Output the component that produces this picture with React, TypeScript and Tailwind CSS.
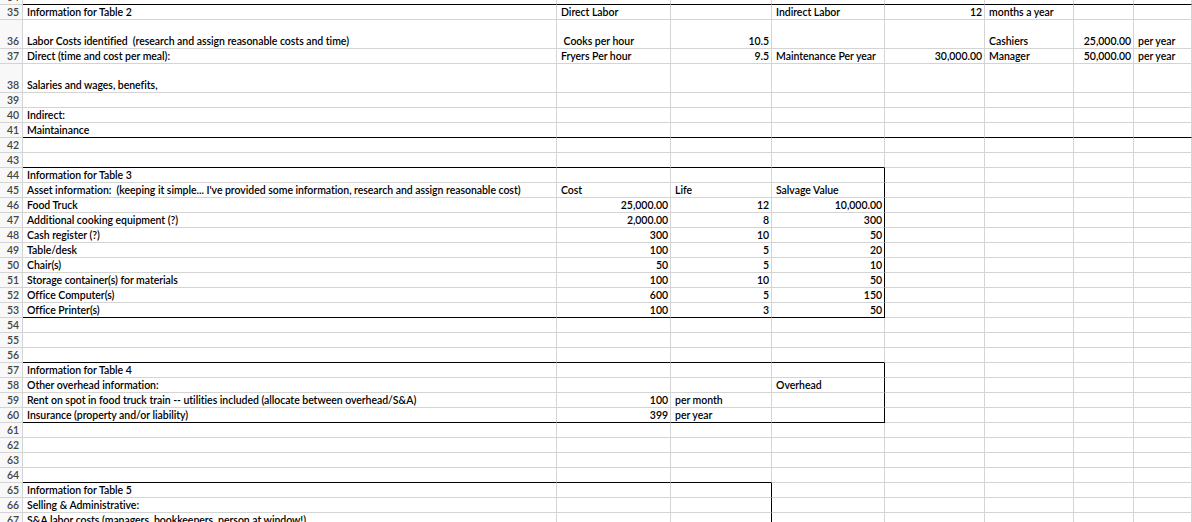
import React from 'react';

type Cell = { t: string; r?: boolean };
type Row = {
	n: number;
	h?: 'short' | 'tall';
	cells?: (Cell | null)[];
	bottom?: number; // how many columns get a black bottom line (from A)
	rightD?: boolean; // black right line after D
	rightC?: boolean; // black right line after C
};

const colW = [
	'w-[534px]',
	'w-[114px]',
	'w-[101px]',
	'w-[113px]',
	'w-[100px]',
	'w-[89px]',
	'w-[60px]',
	'flex-1',
];

const L = (t: string): Cell => ({ t });
const R = (t: string): Cell => ({ t, r: true });

const rows: Row[] = [
	{ n: 34, h: 'short', bottom: 8 },
	{
		n: 35,
		cells: [L('Information for Table 2'), L('Direct Labor'), null, L('Indirect Labor'), R('12'), L('months a year')],
	},
	{
		n: 36,
		h: 'tall',
		cells: [
			L('Labor Costs identified  (research and assign reasonable costs and time)'),
			L(' Cooks per hour'),
			R('10.5'),
			null,
			null,
			L('Cashiers'),
			R('25,000.00'),
			L('per year'),
		],
	},
	{
		n: 37,
		cells: [
			L('Direct (time and cost per meal):'),
			L('Fryers Per hour'),
			R('9.5'),
			L('Maintenance Per year'),
			R('30,000.00'),
			L('Manager'),
			R('50,000.00'),
			L('per year'),
		],
	},
	{ n: 38, h: 'tall', cells: [L('Salaries and wages, benefits,')] },
	{ n: 39 },
	{ n: 40, cells: [L('Indirect:')] },
	{ n: 41, cells: [L('Maintainance')], bottom: 8 },
	{ n: 42 },
	{ n: 43, bottom: 4 },
	{ n: 44, cells: [L('Information for Table 3')], rightD: true },
	{
		n: 45,
		cells: [
			L("Asset information:  (keeping it simple... I've provided some information, research and assign reasonable cost)"),
			L('Cost'),
			L('Life'),
			L('Salvage Value'),
		],
		rightD: true,
	},
	{ n: 46, cells: [L('Food Truck'), R('25,000.00'), R('12'), R('10,000.00')], rightD: true },
	{ n: 47, cells: [L('Additional cooking equipment (?)'), R('2,000.00'), R('8'), R('300')], rightD: true },
	{ n: 48, cells: [L('Cash register (?)'), R('300'), R('10'), R('50')], rightD: true },
	{ n: 49, cells: [L('Table/desk'), R('100'), R('5'), R('20')], rightD: true },
	{ n: 50, cells: [L('Chair(s)'), R('50'), R('5'), R('10')], rightD: true },
	{ n: 51, cells: [L('Storage container(s) for materials'), R('100'), R('10'), R('50')], rightD: true },
	{ n: 52, cells: [L('Office Computer(s)'), R('600'), R('5'), R('150')], rightD: true },
	{ n: 53, cells: [L('Office Printer(s)'), R('100'), R('3'), R('50')], rightD: true, bottom: 4 },
	{ n: 54 },
	{ n: 55 },
	{ n: 56, bottom: 4 },
	{ n: 57, cells: [L('Information for Table 4')], rightD: true },
	{ n: 58, cells: [L('Other overhead information:'), null, null, L('Overhead')], rightD: true },
	{
		n: 59,
		cells: [
			L('Rent on spot in food truck train -- utilities included (allocate between overhead/S&A)'),
			R('100'),
			L('per month'),
		],
		rightD: true,
	},
	{ n: 60, cells: [L('Insurance (property and/or liability)'), R('399'), L('per year')], rightD: true, bottom: 4 },
	{ n: 61 },
	{ n: 62 },
	{ n: 63 },
	{ n: 64, bottom: 3 },
	{ n: 65, cells: [L('Information for Table 5')], rightC: true },
	{ n: 66, cells: [L('Selling & Administrative:')], rightC: true },
	{ n: 67, cells: [L('S&A labor costs (managers, bookkeepers, person at window!)')], rightC: true },
];

const SheetRow: React.FC<{ row: Row }> = ({ row }) => {
	const height =
		row.h === 'short' ? 'h-[5px]' : row.h === 'tall' ? 'h-[29px]' : 'h-[15px]';
	return (
		<div className={`flex shrink-0 ${height}`}>
			<div className="w-[23px] shrink-0 flex items-end justify-end pr-[3px] border-r border-b border-[#d4d4d4] bg-[#f8f8f8] text-[#444] overflow-hidden">
				<span className="leading-[14px]">{row.n}</span>
			</div>
			{colW.map((w, i) => {
				const cell = row.cells?.[i];
				const blackBottom = row.bottom !== undefined && i < row.bottom;
				const blackRight = (row.rightD && i === 3) || (row.rightC && i === 2);
				return (
					<div
						key={i}
						className={`${w} shrink-0 flex items-end overflow-visible border-r border-b ${
							blackBottom ? 'border-b-black' : 'border-b-[#d4d4d4]'
						} ${blackRight ? 'border-r-black' : 'border-r-[#d4d4d4]'} ${
							cell?.r ? 'justify-end pr-[2px]' : 'pl-[4px]'
						}`}
					>
						{cell && <span className="whitespace-pre leading-[14px]">{cell.t}</span>}
					</div>
				);
			})}
		</div>
	);
};

export default function App() {
	return (
		<div className="w-[1192px] h-[522px] overflow-hidden bg-white text-black text-[10.5px] font-semibold tracking-[-0.04px] [font-variant-ligatures:none] font-['Lato',sans-serif] flex flex-col">
			{rows.map((row) => (
				<SheetRow key={row.n} row={row} />
			))}
		</div>
	);
}
